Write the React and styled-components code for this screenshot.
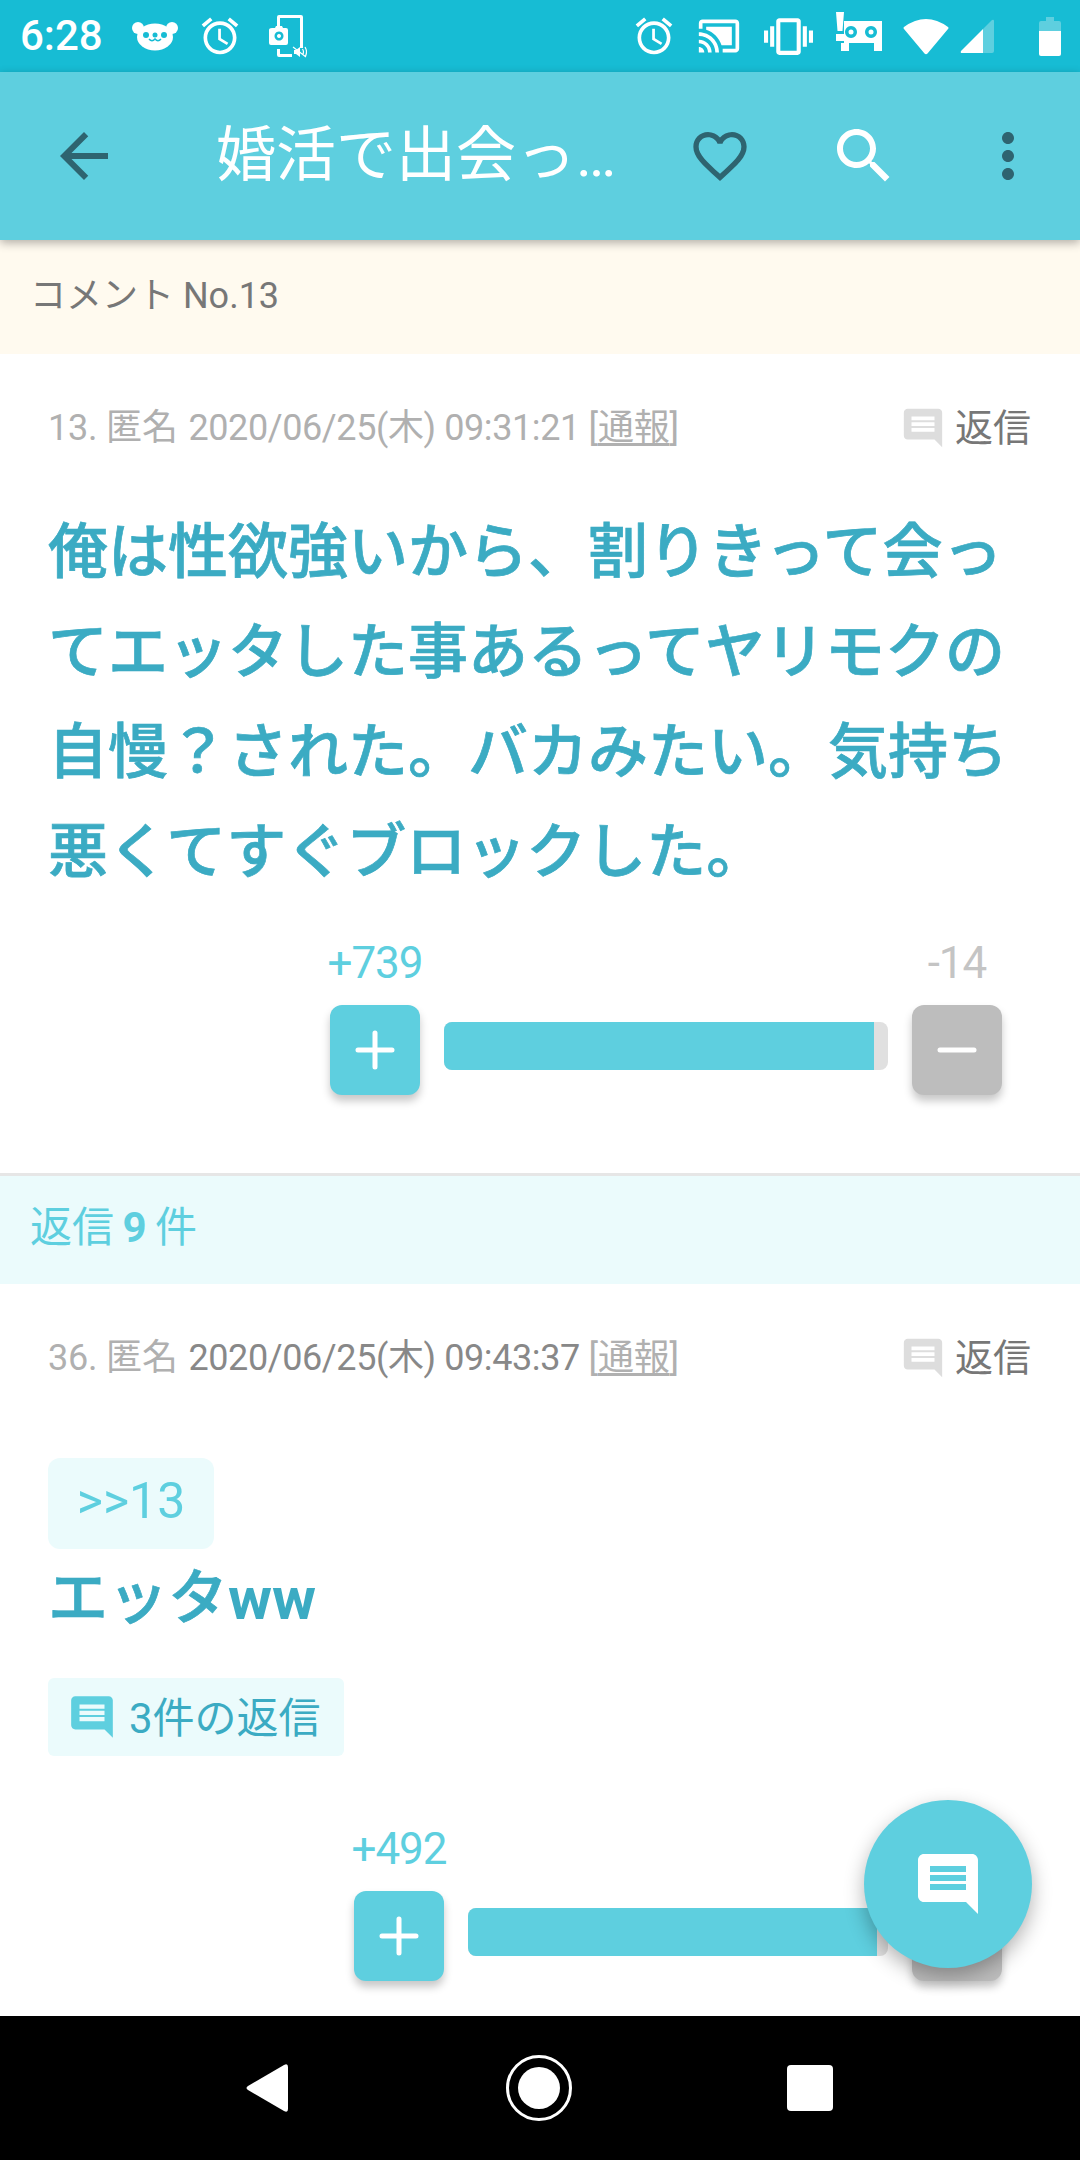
import React from 'react';
import styled, { createGlobalStyle } from 'styled-components';

const GlobalStyle = createGlobalStyle`
  html, body {
    margin: 0;
    padding: 0;
    background: #fff;
  }
  * {
    box-sizing: border-box;
  }
`;

const fontStack = `Roboto, "Noto Sans CJK JP", sans-serif`;
const accent = '#5ecfdf';
const deepText = '#3babc3';
const darkIcon = '#2e6470';
const paleCyan = '#ebfbfc';

const Screen = styled.div`
  width: 1080px;
  height: 2160px;
  display: flex;
  flex-direction: column;
  position: relative;
  overflow: hidden;
  font-family: ${fontStack};
  background: #fff;
`;

const StatusBar = styled.div`
  height: 72px;
  flex: none;
  background: #17bcd4;
  display: flex;
  align-items: center;
  justify-content: space-between;
  padding: 0 19px 0 20px;
`;

const StatusGroup = styled.div`
  display: flex;
  align-items: center;
`;

const Clock = styled.span`
  color: #fff;
  font-size: 42px;
  font-weight: 500;
  line-height: 72px;
  width: 79px;
  white-space: nowrap;
`;

const Glyph = styled.svg`
  display: block;
  flex: none;
  margin-left: ${props => props.$gap || 0}px;
  fill: #fff;
`;

const AppBar = styled.header`
  height: 168px;
  flex: none;
  background: ${accent};
  display: flex;
  align-items: center;
  padding: 0 36px 0 48px;
  position: relative;
  z-index: 2;
  box-shadow: 0 3px 9px rgba(0, 0, 0, 0.3);
`;

const BarIcon = styled.svg`
  display: block;
  flex: none;
  width: ${props => props.$size || 72}px;
  height: ${props => props.$size || 72}px;
  margin-left: ${props => props.$gap || 0}px;
  fill: ${props => props.$light ? '#fff' : darkIcon};
`;

const Title = styled.h1`
  margin: 0 0 0 96px;
  width: 404px;
  flex: none;
  color: #fff;
  font-size: 60px;
  font-weight: 400;
  line-height: 84px;
  white-space: nowrap;
  overflow: hidden;
  text-overflow: ellipsis;
`;

const Content = styled.main`
  flex: 1;
  min-height: 0;
  overflow: hidden;
`;

const Notice = styled.div`
  height: 114px;
  background: #fffaef;
  color: #777;
  font-size: 36px;
  line-height: 112px;
  padding-left: 30px;
`;

const Comment = styled.article`
  padding: 49px 48px 0 48px;
  border-bottom: ${props => props.$divided ? '3px solid #e6e6e6' : 'none'};
  padding-bottom: ${props => props.$divided ? 78 : 0}px;
`;

const MetaRow = styled.div`
  display: flex;
  align-items: center;
  justify-content: space-between;
  height: 50px;
`;

const MetaText = styled.div`
  color: #b0b0b0;
  font-size: 36px;
  line-height: 50px;
  white-space: nowrap;
  letter-spacing: -0.2px;
`;

const MetaDate = styled.span`
  margin-left: 2px;
  letter-spacing: -0.4px;
  color: ${props => props.$dark ? '#888' : '#b0b0b0'};
`;

const Report = styled.span`
  text-decoration: underline;
  text-underline-offset: 3px;
`;

const ReplyLink = styled.div`
  display: flex;
  align-items: center;
  color: #777;
  font-size: 38px;
  margin-right: 1px;
`;

const ReplyLinkLabel = styled.span`
  line-height: 50px;
`;

const ReplyLinkIcon = styled.svg`
  width: 46px;
  height: 46px;
  fill: #ddd;
  margin-right: 9px;
`;

const Body = styled.p`
  margin: 50px 0 0;
  color: ${deepText};
  font-size: 60px;
  font-weight: 500;
  line-height: 100px;
  -webkit-text-stroke: 0.7px ${deepText};
  b {
    font-weight: 700;
    -webkit-text-stroke: 0;
  }
`;

const ShortBody = styled(Body)`
  margin: 5px 0 0;
  line-height: 90px;
`;

const QuoteTag = styled.div`
  margin-top: 75px;
  width: 166px;
  height: 91px;
  border-radius: 12px;
  background: ${paleCyan};
  color: ${accent};
  font-size: 50px;
  line-height: 87px;
  text-align: center;
`;

const RepliesTag = styled.div`
  margin-top: 34px;
  width: 296px;
  height: 78px;
  border-radius: 6px;
  background: ${paleCyan};
  color: ${deepText};
  font-size: 42px;
  display: flex;
  align-items: center;
  padding-left: 19px;
`;

const RepliesLabel = styled.span`
  padding-bottom: 5px;
`;

const RepliesIcon = styled.svg`
  width: 50px;
  height: 50px;
  fill: ${accent};
  margin-right: 12px;
  flex: none;
`;

const VoteRow = styled.div`
  width: ${props => props.$width}px;
  margin: ${props => props.$top}px 30px 0 auto;
  display: flex;
  align-items: flex-start;
`;

const VoteColumn = styled.div`
  width: 90px;
  flex: none;
  display: flex;
  flex-direction: column;
  align-items: center;
`;

const VoteCount = styled.div`
  height: 50px;
  margin-bottom: 18px;
  font-size: 44px;
  font-weight: 400;
  letter-spacing: -1px;
  line-height: 52px;
  white-space: nowrap;
  color: ${props => props.$up ? accent : '#c4c4c4'};
`;

const VoteButton = styled.div`
  width: 90px;
  height: 90px;
  border-radius: 12px;
  background: ${props => props.$up ? accent : '#bdbdbd'};
  box-shadow: 0 6px 9px rgba(0, 0, 0, 0.22);
  display: flex;
  align-items: center;
  justify-content: center;
`;

const VoteMark = styled.svg`
  width: 42px;
  height: 42px;
  stroke: #fff;
  stroke-width: 5;
  stroke-linecap: round;
  fill: none;
`;

const Track = styled.div`
  flex: 1;
  height: 48px;
  margin: 85px 24px 0;
  border-radius: 8px;
  background: #e0e0e0;
  overflow: hidden;
`;

const TrackFill = styled.div`
  height: 100%;
  background: ${accent};
`;

const RepliesHeader = styled.div`
  height: 108px;
  background: ${paleCyan};
  color: ${accent};
  font-size: 42px;
  line-height: 104px;
  padding-left: 30px;
  word-spacing: -2px;
  b {
    font-weight: 700;
  }
`;

const Fab = styled.div`
  position: absolute;
  left: 864px;
  top: 1800px;
  width: 168px;
  height: 168px;
  border-radius: 50%;
  background: ${accent};
  box-shadow: 0 8px 20px rgba(0, 0, 0, 0.3);
  display: flex;
  align-items: center;
  justify-content: center;
  z-index: 3;
`;

const FabIcon = styled.svg`
  width: 72px;
  height: 72px;
  fill: #fff;
`;

const NavBar = styled.nav`
  height: 144px;
  flex: none;
  background: #000;
  display: flex;
  align-items: center;
  justify-content: space-between;
  padding: 0 247px 0 244px;
`;

const NavIcon = styled.svg`
  display: block;
  flex: none;
  fill: #fff;
`;

const commentPath = 'M21.99 4c0-1.1-.89-2-1.99-2H4c-1.1 0-2 .9-2 2v12c0 1.1.9 2 2 2h14l4 4-.01-18zM18 14H6v-2h12v2zm0-3H6V9h12v2zm0-3H6V6h12v2z';
const alarmPath = 'M22 5.72l-4.6-3.86-1.29 1.53 4.6 3.86L22 5.72zM7.88 3.39L6.6 1.86 2 5.71l1.29 1.53 4.59-3.85zM12.5 8H11v6l4.75 2.85.75-1.23-4-2.37V8zM12 4c-4.97 0-9 4.03-9 9s4.03 9 9 9 9-4.03 9-9-4.03-9-9-9zm0 16c-3.87 0-7-3.13-7-7s3.13-7 7-7 7 3.13 7 7-3.13 7-7 7z';

const BearGlyph = ({ gap }) => (
  <Glyph $gap={gap} width="46" height="30" viewBox="0 0 46 30">
    <circle cx="6" cy="7" r="6" />
    <circle cx="40" cy="7" r="6" />
    <ellipse cx="23" cy="16" rx="18" ry="13.500" />
    <circle cx="14" cy="14" r="3" fill="#17bcd4" />
    <circle cx="32" cy="14" r="3" fill="#17bcd4" />
    <circle cx="23" cy="14" r="2.500" fill="#17bcd4" />
    <path d="M17 18q3 3.500 6 0q3 3.500 6 0" fill="none" stroke="#17bcd4" strokeWidth="1.500" />
  </Glyph>
);

const AlarmGlyph = ({ gap }) => (
  <Glyph $gap={gap} width="44" height="44" viewBox="0 0 24 24">
    <path d={alarmPath} />
  </Glyph>
);

// rotate-screen hint with the camera badge and a small muted speaker
const RotateGlyph = ({ gap }) => (
  <Glyph $gap={gap} width="38" height="44" viewBox="0 0 38 44">
    <path d="M8 12V3q0-2 2-2h22q2 0 2 2v31h-3V4H11v8zM8 35h3v5h12v3H10q-2 0-2-2z" />
    <path fillRule="evenodd" d="M3 14h3l1-2h6l1 2h3q2 0 2 2v13q0 2-2 2H2q-2 0-2-2V16q0-2 3-2zM10 17.500a4.500 4.500 0 1 0 .01 0zM10 20a2 2 0 1 1-.01 0z" />
    <path d="M25 36h2l4-3v10l-4-3h-2z" />
    <path d="M24 33l13 10M33.500 35q2 3 0 6M36 33q3 5 0 10" stroke="#fff" strokeWidth="1.200" fill="none" />
  </Glyph>
);

const CastGlyph = ({ gap }) => (
  <Glyph $gap={gap} width="44" height="44" viewBox="0 0 24 24">
    <path d="M1 18v3h3c0-1.660-1.340-3-3-3zm0-4v2c2.760 0 5 2.240 5 5h2c0-3.870-3.130-7-7-7zm18-7H5v1.630c3.960 1.280 7.090 4.410 8.370 8.370H19V7zM1 10v2c4.970 0 9 4.030 9 9h2c0-6.080-4.930-11-11-11zm20-7H3c-1.100 0-2 .9-2 2v3h2V5h18v14h-7v2h7c1.100 0 2-.9 2-2V5c0-1.100-.9-2-2-2z" />
  </Glyph>
);

const VibrateGlyph = ({ gap }) => (
  <Glyph $gap={gap} width="49" height="49" viewBox="0 0 24 24">
    <path d="M0 15h2V9H0v6zm3 2h2V7H3v10zm19-8v6h2V9h-2zm-3 8h2V7h-2v10zM16.500 3h-9C6.670 3 6 3.670 6 4.500v15c0 .83.670 1.500 1.500 1.500h9c.83 0 1.500-.67 1.500-1.500v-15c0-.83-.67-1.500-1.500-1.500zM16 19H8V5h8v14z" />
  </Glyph>
);

const RobotGlyph = ({ gap }) => (
  <Glyph $gap={gap} width="46" height="48" viewBox="0 0 46 48">
    <path d="M0 0h8L6.500 19h-5zM0 22h8v7H0z" />
    <path fillRule="evenodd" d="M8 9h38v30h-8v-8H13v8H5v-8h3zM15 14a6 6 0 1 0 .01 0zM35 14a6 6 0 1 0 .01 0z" />
    <circle cx="15" cy="20" r="2.500" />
    <circle cx="35" cy="20" r="2.500" />
  </Glyph>
);

const WifiGlyph = ({ gap }) => (
  <Glyph $gap={gap} width="46" height="38" viewBox="0 0 46 38">
    <path d="M1 10Q23-6 45 10q1 1 0 2L24.500 36.500q-1.500 1.500-3 0L1 12q-1-1 0-2z" />
  </Glyph>
);

const SignalGlyph = ({ gap }) => (
  <Glyph $gap={gap} width="34" height="34" viewBox="0 0 34 34">
    <path d="M23 10L1 32q-1 2 1 2h21z" />
    <path d="M23 10L32 1q2-1 2 1v30q0 2-2 2h-9z" fill={accent} />
  </Glyph>
);

const BatteryGlyph = ({ gap }) => (
  <Glyph $gap={gap} width="22" height="39" viewBox="0 0 22 39">
    <path d="M7 0h8v4h5q2 0 2 2v8H0V6q0-2 2-2h5z" fill={accent} />
    <path d="M0 14h22v23q0 2-2 2H2q-2 0-2-2z" />
  </Glyph>
);

const VoteBar = ({ width, top, up, down, ratio }) => (
  <VoteRow $width={width} $top={top}>
    <VoteColumn>
      <VoteCount $up>{up}</VoteCount>
      <VoteButton $up>
        <VoteMark viewBox="0 0 42 42">
          <path d="M21 4v34M4 21h34" />
        </VoteMark>
      </VoteButton>
    </VoteColumn>
    <Track>
      <TrackFill style={{ width: `${ratio}%` }} />
    </Track>
    <VoteColumn>
      <VoteCount>{down}</VoteCount>
      <VoteButton>
        <VoteMark viewBox="0 0 42 42">
          <path d="M4 21h34" />
        </VoteMark>
      </VoteButton>
    </VoteColumn>
  </VoteRow>
);

const ReplyAction = () => (
  <ReplyLink>
    <ReplyLinkIcon viewBox="0 0 24 24">
      <path d={commentPath} />
    </ReplyLinkIcon>
    <ReplyLinkLabel>返信</ReplyLinkLabel>
  </ReplyLink>
);

const App = () => (
  <Screen>
    <GlobalStyle />
    <StatusBar>
      <StatusGroup>
        <Clock>6:28</Clock>
        <BearGlyph gap={33} />
        <AlarmGlyph gap={20} />
        <RotateGlyph gap={27} />
      </StatusGroup>
      <StatusGroup>
        <AlarmGlyph />
        <CastGlyph gap={21} />
        <VibrateGlyph gap={23} />
        <RobotGlyph gap={23} />
        <WifiGlyph gap={21} />
        <SignalGlyph gap={11} />
        <BatteryGlyph gap={45} />
      </StatusGroup>
    </StatusBar>

    <AppBar>
      <BarIcon viewBox="0 0 24 24">
        <path d="M20 11H7.830l5.590-5.590L12 4l-8 8 8 8 1.410-1.410L7.830 13H20v-2z" />
      </BarIcon>
      <Title>婚活で出会った人の話をするトピ</Title>
      <BarIcon $size={64} $gap={68} viewBox="0 0 24 24">
        <path d="M16.500 3c-1.740 0-3.410.81-4.500 2.090C10.910 3.810 9.240 3 7.500 3 4.420 3 2 5.420 2 8.500c0 3.780 3.400 6.860 8.550 11.540L12 21.350l1.450-1.320C18.600 15.360 22 12.280 22 8.500 22 5.420 19.580 3 16.500 3zm-4.400 15.550l-.1.1-.1-.1C7.140 14.240 4 11.390 4 8.500 4 6.500 5.500 5 7.500 5c1.540 0 3.040.99 3.570 2.360h1.870C13.460 5.990 14.960 5 16.500 5c2 0 3.500 1.500 3.500 3.500 0 2.890-3.140 5.740-7.900 10.050z" />
      </BarIcon>
      <BarIcon $light $gap={76} viewBox="0 0 24 24">
        <path d="M15.500 14h-.79l-.28-.27C15.410 12.590 16 11.110 16 9.500 16 5.910 13.090 3 9.500 3S3 5.910 3 9.500 5.910 16 9.500 16c1.610 0 3.090-.59 4.230-1.570l.27.28v.79l5 4.990L20.490 19l-4.990-5zm-6 0C7.010 14 5 11.990 5 9.500S7.010 5 9.500 5 14 7.010 14 9.500 11.990 14 9.500 14z" />
      </BarIcon>
      <BarIcon $gap={72} viewBox="0 0 24 24">
        <path d="M12 8c1.100 0 2-.9 2-2s-.9-2-2-2-2 .9-2 2 .9 2 2 2zm0 2c-1.100 0-2 .9-2 2s.9 2 2 2 2-.9 2-2-.9-2-2-2zm0 6c-1.100 0-2 .9-2 2s.9 2 2 2 2-.9 2-2-.9-2-2-2z" />
      </BarIcon>
    </AppBar>

    <Content>
      <Notice>コメント No.13</Notice>

      <Comment $divided>
        <MetaRow>
          <MetaText>
            13. 匿名 <MetaDate>2020/06/25(木) 09:31:21</MetaDate> [<Report>通報</Report>]
          </MetaText>
          <ReplyAction />
        </MetaRow>
        <Body>俺は性欲強いから、割りきって会ってエッタした事あるってヤリモクの自慢？された。バカみたい。気持ち悪くてすぐブロックした。</Body>
        <VoteBar width={672} top={34} up="+739" down="-14" ratio={96.8} />
      </Comment>

      <RepliesHeader>返信 <b>9</b> 件</RepliesHeader>

      <Comment>
        <MetaRow>
          <MetaText>
            36. 匿名 <MetaDate $dark>2020/06/25(木) 09:43:37</MetaDate> [<Report>通報</Report>]
          </MetaText>
          <ReplyAction />
        </MetaRow>
        <QuoteTag>&gt;&gt;13</QuoteTag>
        <ShortBody>エッタ<b>ww</b></ShortBody>
        <RepliesTag>
          <RepliesIcon viewBox="0 0 24 24">
            <path d={commentPath} />
          </RepliesIcon>
          <RepliesLabel>3件の返信</RepliesLabel>
        </RepliesTag>
        <VoteBar width={648} top={67} up="+492" down="-11" ratio={97.4} />
      </Comment>
    </Content>

    <Fab>
      <FabIcon viewBox="0 0 24 24">
        <path d={commentPath} />
      </FabIcon>
    </Fab>

    <NavBar>
      <NavIcon width="46" height="52" viewBox="0 0 46 52">
        <path d="M40 3q4-2 4 2v42q0 4-4 2L4 28q-3-2 0-4z" />
      </NavIcon>
      <NavIcon width="66" height="66" viewBox="0 0 66 66">
        <circle cx="33" cy="33" r="31.500" fill="none" stroke="#fff" strokeWidth="3" />
        <circle cx="33" cy="33" r="21" />
      </NavIcon>
      <NavIcon width="46" height="46" viewBox="0 0 46 46">
        <rect x="0" y="0" width="46" height="46" rx="4" />
      </NavIcon>
    </NavBar>
  </Screen>
);

export default App;
